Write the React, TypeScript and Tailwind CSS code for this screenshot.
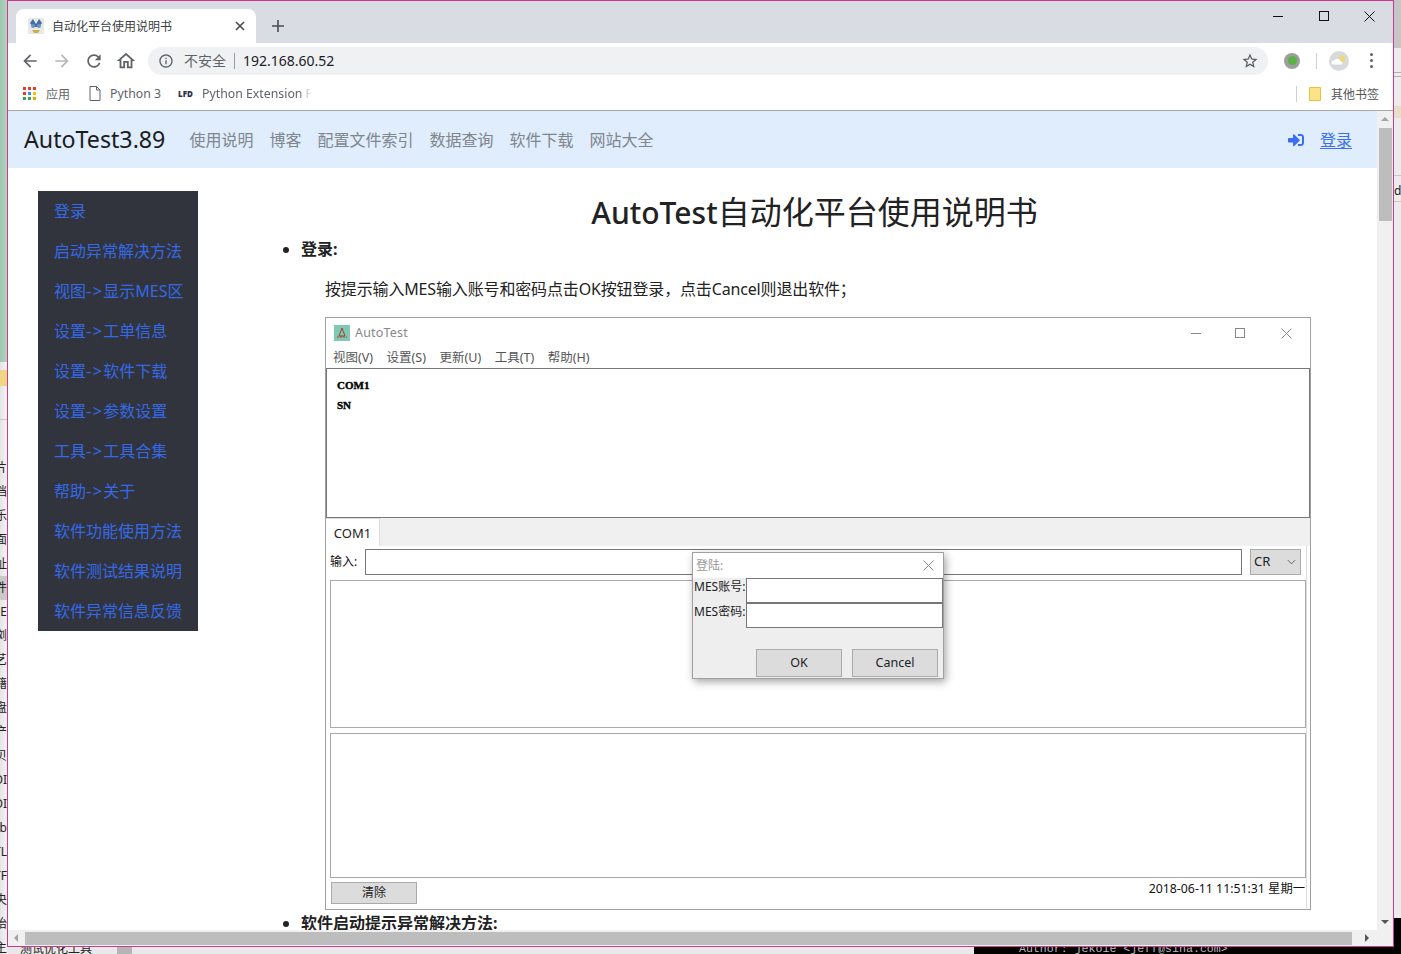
import { FaSignInAlt } from 'react-icons/fa';

const font = "font-['Noto_Sans','Noto_Sans_CJK_SC',sans-serif]";

const sideLinks = [
  '登录',
  '启动异常解决方法',
  '视图->显示MES区',
  '设置->工单信息',
  '设置->软件下载',
  '设置->参数设置',
  '工具->工具合集',
  '帮助->关于',
  '软件功能使用方法',
  '软件测试结果说明',
  '软件异常信息反馈',
];

const navLinks = ['使用说明', '博客', '配置文件索引', '数据查询', '软件下载', '网站大全'];

const leftChars = ['片', '档', '乐', '面', '址', '件', 'E', '浏', '艺', '籍', '盘', '产', '贝', 'DI', 'DI', 'sb', 'TL', 'TF', '央', '饴', '主'];

function Mat({ d, className }: { d: string; className: string }) {
  return (
    <svg viewBox="0 0 24 24" className={className} fill="currentColor">
      <path d={d} />
    </svg>
  );
}

function TabBar() {
  return (
    <div className="flex h-[42px] shrink-0 bg-[#dadce3] pl-2">
      <div className="mt-2 flex h-[34px] w-[240px] items-center rounded-t-lg bg-white pl-3 pr-[11px]">
        <svg viewBox="0 0 16 16" className="h-4 w-4 shrink-0">
          <rect width="16" height="16" fill="#e8e8e8" />
          <path d="M2 5 5 1l3 5 3-5 3 4-3 4H5z" fill="#3f6fa8" />
          <circle cx="5" cy="8" r="2" fill="#6f93bd" />
          <circle cx="11" cy="8" r="2" fill="#6f93bd" />
          <path d="M4 12h8l-2 3H6z" fill="#c8b04a" />
        </svg>
        <span className="ml-2 flex-1 pt-[2px] text-xs text-[#3c4043]">自动化平台使用说明书</span>
        <svg viewBox="0 0 10 10" className="h-[10px] w-[10px] text-[#4a4a4a]" stroke="currentColor" strokeWidth="1.6">
          <path d="M1 1l8 8M9 1l-8 8" />
        </svg>
      </div>
      <svg viewBox="0 0 12 12" className="ml-4 mt-[19px] h-3 w-3 text-[#4a4d52]" stroke="currentColor" strokeWidth="1.6">
        <path d="M6 0v12M0 6h12" />
      </svg>
      <div className="flex-1" />
      <div className="flex h-[30px] items-center text-[#111]">
        <div className="mr-[36px] h-px w-[10px] bg-current" />
        <div className="mr-[35px] h-[10px] w-[10px] border border-current" />
        <svg viewBox="0 0 11 11" className="mr-[18px] h-[11px] w-[11px]" stroke="currentColor" strokeWidth="1">
          <path d="M.5.5l10 10M10.5.5l-10 10" />
        </svg>
      </div>
    </div>
  );
}

function Toolbar() {
  return (
    <div className="flex h-[37px] shrink-0 items-center bg-white pb-[2px] pl-[12px] text-[#5f6368]">
      <Mat className="h-5 w-5" d="M20 11H7.83l5.59-5.59L12 4l-8 8 8 8 1.41-1.41L7.83 13H20v-2z" />
      <Mat className="ml-3 h-5 w-5 text-[#b4b6b9]" d="M12 4l-1.41 1.41L16.17 11H4v2h12.17l-5.58 5.59L12 20l8-8z" />
      <Mat className="ml-3 h-5 w-5" d="M17.65 6.35C16.2 4.9 14.21 4 12 4c-4.42 0-7.99 3.58-7.99 8s3.57 8 7.99 8c3.73 0 6.84-2.55 7.73-6h-2.08c-.82 2.33-3.04 4-5.65 4-3.31 0-6-2.69-6-6s2.69-6 6-6c1.66 0 3.14.69 4.22 1.78L13 11h7V4l-2.35 2.35z" />
      <Mat className="ml-[11px] h-[22px] w-[22px]" d="M12 5.69l5 4.5V18h-2v-6H9v6H7v-7.81l5-4.5M12 3L2 12h3v8h6v-6h2v6h6v-8h3L12 3z" />
      <div className="ml-[11px] flex h-7 w-[1120px] items-center rounded-full bg-[#eff1f3] pl-[10px] pr-[9px]">
        <Mat className="h-4 w-4" d="M11 7h2v2h-2zm0 4h2v6h-2zm1-9C6.48 2 2 6.48 2 12s4.48 10 10 10 10-4.48 10-10S17.52 2 12 2zm0 18c-4.41 0-8-3.59-8-8s3.59-8 8-8 8 3.59 8 8-3.59 8-8 8z" />
        <span className="ml-[10px] text-sm">不安全</span>
        <div className="mx-2 h-4 w-px bg-[#9a9da1]" />
        <span className="text-sm text-[#202124]">192.168.60.52</span>
        <div className="flex-1" />
        <Mat className="h-[18px] w-[18px] text-[#55585c]" d="M22 9.24l-7.19-.62L12 2 9.19 8.63 2 9.24l5.46 4.73L5.82 21 12 17.27 18.18 21l-1.63-7.03L22 9.24zM12 15.4l-3.76 2.27 1-4.28-3.32-2.88 4.38-.38L12 6.1l1.71 4.04 4.38.38-3.32 2.88 1 4.28L12 15.4z" />
      </div>
      <div className="ml-4 flex h-4 w-4 items-center justify-center rounded-full bg-[#9e9e9e]">
        <div className="h-[9px] w-[9px] rounded-full bg-[#5cb345]" />
      </div>
      <div className="ml-4 h-4 w-px bg-[#d0d0d0]" />
      <svg viewBox="0 0 20 20" className="ml-[12px] h-5 w-5 shrink-0">
        <circle cx="10" cy="10" r="10" fill="#d9d9d9" />
        <circle cx="13" cy="8" r="3" fill="#f2d860" />
        <path d="M4 14a2.5 2.5 0 0 1 1-5 4 4 0 0 1 7 1 2.2 2.2 0 0 1 1 4z" fill="#fff" stroke="#bcd0e6" strokeWidth=".6" />
      </svg>
      <div className="ml-[21px] flex flex-col gap-[3px]">
        <div className="h-[3px] w-[3px] rounded-full bg-[#5f6368]" />
        <div className="h-[3px] w-[3px] rounded-full bg-[#5f6368]" />
        <div className="h-[3px] w-[3px] rounded-full bg-[#5f6368]" />
      </div>
    </div>
  );
}

function Bookmarks() {
  return (
    <div className="flex h-[31px] shrink-0 items-center border-b border-[#a8a8a8] bg-white pb-px pl-[15px] text-xs text-[#5f6368]">
      <svg viewBox="0 0 13 13" className="mb-[2px] h-[13px] w-[13px]">
        <rect x="0" y="0" width="3" height="3" fill="#e53935" />
        <rect x="5" y="0" width="3" height="3" fill="#e53935" />
        <rect x="10" y="0" width="3" height="3" fill="#e53935" />
        <rect x="0" y="5" width="3" height="3" fill="#e53935" />
        <rect x="5" y="5" width="3" height="3" fill="#4285f4" />
        <rect x="10" y="5" width="3" height="3" fill="#fbbc05" />
        <rect x="0" y="10" width="3" height="3" fill="#34a853" />
        <rect x="5" y="10" width="3" height="3" fill="#34a853" />
        <rect x="10" y="10" width="3" height="3" fill="#f0a000" />
      </svg>
      <span className="ml-[10px]">应用</span>
      <svg viewBox="0 0 12 15" className="mb-[2px] ml-[19px] h-[15px] w-3" fill="none" stroke="#5f6368" strokeWidth="1">
        <path d="M1 .5h6.5L11 4v10.5H1zM7.5.5V4H11" />
      </svg>
      <span className="ml-[9px] w-[51px] whitespace-nowrap text-[12.3px]">Python 3</span>
      <span className="ml-[17px] w-[16px] text-[8px] font-black text-[#2b2f4a]">LFD</span>
      <span className="ml-2 w-[110px] overflow-hidden whitespace-nowrap text-[12.3px] [mask-image:linear-gradient(to_right,black_88%,transparent)]">Python Extension Pa</span>
      <div className="flex-1" />
      <div className="mb-[2px] h-4 w-px bg-[#cfcfcf]" />
      <svg viewBox="0 0 12 14" className="mb-[2px] ml-[12px] h-[14px] w-3">
        <path d="M.5.5h11v13H.5z" fill="#fbe38a" stroke="#e8c23e" />
      </svg>
      <span className="ml-[10px] mr-[14px] text-[#555]">其他书签</span>
    </div>
  );
}

function AppShot() {
  return (
    <div className="flex h-[593px] w-[986px] shrink-0 flex-col border border-[#a0a0a0] bg-white text-xs">
      <div className="flex h-[28px] shrink-0 items-center pl-2 pt-[2px] text-[#888]">
        <svg viewBox="0 0 16 16" className="h-4 w-4">
          <rect width="16" height="16" fill="#7fc8b4" />
          <path d="M8 3l3 8H5z" fill="none" stroke="#a04030" />
          <path d="M3 12h10" stroke="#c03030" strokeDasharray="2 1" />
        </svg>
        <span className="ml-[5px] text-[12.5px] tracking-[0.2px]">AutoTest</span>
        <div className="flex-1" />
        <div className="mr-[34px] h-px w-[10px] bg-[#888]" />
        <div className="mr-[36px] h-[10px] w-[10px] border border-[#888]" />
        <svg viewBox="0 0 11 11" className="mr-[18px] h-[11px] w-[11px]" stroke="#888" strokeWidth="1">
          <path d="M.5.5l10 10M10.5.5l-10 10" />
        </svg>
      </div>
      <div className="flex h-[22px] shrink-0 items-center gap-[13.6px] pl-[7px] pt-[2px] text-[12.5px] text-[#555]">
        <span>视图(V)</span>
        <span>设置(S)</span>
        <span>更新(U)</span>
        <span>工具(T)</span>
        <span>帮助(H)</span>
      </div>
      <div className="h-[150px] shrink-0 border border-[#777] pl-[10px] pt-[6px] font-['Liberation_Serif','Noto_Sans_CJK_SC',serif] text-[11px] font-black leading-5 text-black [-webkit-text-stroke:0.4px_black]">
        <div>COM1</div>
        <div>SN</div>
      </div>
      <div className="flex min-h-0 flex-1 flex-col bg-[#f0f0f0]">
        <div className="flex h-7 shrink-0">
          <div className="flex h-[29px] w-[54px] items-center justify-center border-r border-t border-[#dcdcdc] bg-white pt-[2px] text-[13px] text-[#222]">COM1</div>
        </div>
        <div className="flex min-h-0 flex-1 flex-col bg-white pb-px pl-[3px]">
          <div className="mr-[3px] flex min-h-0 flex-1 flex-col border-r border-[#dcdcdc]">
            <div className="flex h-[32px] shrink-0 items-center">
              <span className="ml-px w-[35px] text-xs text-[#111]">输入:</span>
              <div className="h-[26px] w-[877px] border border-[#777] bg-white" />
              <div className="ml-2 flex h-[26px] w-[51px] items-center justify-between border border-[#aaa] bg-[#dcdcdc] pl-[3px] pr-[4px] text-[13px] text-[#222]">
                <span>CR</span>
                <svg viewBox="0 0 10 6" className="h-[6px] w-[9px]" fill="none" stroke="#555" strokeWidth="1">
                  <path d="M1 1l4 4 4-4" />
                </svg>
              </div>
            </div>
            <div className="ml-px mt-[2px] h-[148px] shrink-0 border border-[#aaa] bg-white" />
            <div className="ml-px mt-[5px] h-[145px] shrink-0 border border-[#aaa] bg-white" />
            <div className="flex flex-1 items-start justify-between pl-[2px] pr-px">
              <div className="mt-[4px] flex h-[22px] w-[86px] items-center justify-center border border-[#aaa] bg-[#dcdcdc] text-[#222]">清除</div>
              <span className="mt-[3px] text-[12.3px] text-[#111]">2018-06-11 11:51:31 星期一</span>
            </div>
          </div>
        </div>
      </div>
    </div>
  );
}

function LoginDialog() {
  return (
    <div className="absolute left-[692px] top-[552px] z-10 flex h-[127px] w-[252px] flex-col border border-[#a0a0a0] bg-[#eeeeee] text-xs text-[#222] shadow-[2px_3px_8px_rgba(0,0,0,0.35)]">
      <div className="flex h-[25px] shrink-0 items-center justify-between bg-white pl-[3px] pr-[9px] text-[#999]">
        <span>登陆:</span>
        <svg viewBox="0 0 11 11" className="h-[11px] w-[11px]" stroke="#888" strokeWidth="1">
          <path d="M.5.5l10 10M10.5.5l-10 10" />
        </svg>
      </div>
      <div className="flex h-[25px] shrink-0 items-center">
        <span className="w-[53px] shrink-0 pb-[7px] pl-px">MES账号:</span>
        <div className="h-[25px] flex-1 border border-[#777] bg-white" />
      </div>
      <div className="flex h-[25px] shrink-0 items-center">
        <span className="w-[53px] shrink-0 pb-[7px] pl-px">MES密码:</span>
        <div className="h-[25px] flex-1 border border-[#777] bg-white" />
      </div>
      <div className="mr-[5px] mt-[21px] flex justify-end gap-[10px]">
        <div className="flex h-[28px] w-[86px] items-center justify-center border border-[#aaa] bg-[#dcdcdc] text-[12.5px]">OK</div>
        <div className="flex h-[28px] w-[86px] items-center justify-center border border-[#aaa] bg-[#dcdcdc] text-[12.5px]">Cancel</div>
      </div>
    </div>
  );
}

function VScroll() {
  return (
    <div className="flex w-[16px] shrink-0 flex-col items-center bg-[#f0f0f0]">
      <div className="mt-[6px] h-0 w-0 border-x-[4px] border-b-[4px] border-x-transparent border-b-[#a3a3a3]" />
      <div className="mt-[7px] h-[93px] w-[13px] bg-[#bdbdbd]" />
      <div className="flex-1" />
      <div className="mb-[6px] h-0 w-0 border-x-[4px] border-t-[4px] border-x-transparent border-t-[#555]" />
    </div>
  );
}

function SideLink({ text }: { text: string }) {
  const parts = text.split('->');
  return (
    <div className="flex h-10 items-center whitespace-nowrap">
      {parts.length === 2 ? (
        <span>
          {parts[0]}
          <span className="tracking-[1.5px]">-&gt;</span>
          {parts[1]}
        </span>
      ) : (
        text
      )}
    </div>
  );
}

function LeftStrip() {
  return (
    <div className="flex h-full w-[7px] shrink-0 flex-col overflow-hidden bg-gradient-to-r from-[#e4e4e4] to-[#f4f4f4]">
      <div className="h-[362px] shrink-0 bg-gradient-to-r from-[#9cc6ae] to-[#b6d2c0]" />
      <div className="mt-[8px] h-[16px] shrink-0 bg-[#f0d684]" />
      <div className="mt-[33px] h-px shrink-0 bg-[#c8c8c8]" />
      <div className="mt-[36px] flex flex-col">
        {leftChars.map((c, i) => (
          <div
            key={i}
            className={`h-6 w-[7px] overflow-hidden whitespace-nowrap text-right text-xs leading-6 text-[#222] [direction:rtl] ${c === '件' ? 'bg-[#c9c9c9]' : ''}`}
          >
            {c}
          </div>
        ))}
      </div>
    </div>
  );
}

function RightStrip() {
  return (
    <div className="flex h-full w-[7px] shrink-0 flex-col overflow-hidden bg-[#ececec] text-xs text-[#222]">
      <div className="h-[48px] shrink-0 bg-[#c6c6c6]" />
      <div className="mt-[24px] h-px shrink-0 bg-[#b0b0b0]" />
      <div className="mt-[3px] h-px shrink-0 bg-[#b0b0b0]" />
      <div className="mt-[29px] h-3 shrink-0 bg-[#e6e0c8]" />
      <div className="mt-[57px] h-px shrink-0 bg-[#c8c8c8]" />
      <div className="mt-[7px] h-4 shrink-0 overflow-hidden leading-4">d|</div>
      <div className="mt-[2px] h-px shrink-0 bg-[#c8c8c8]" />
      <div className="flex-1" />
      <div className="h-[36px] shrink-0 bg-black" />
    </div>
  );
}

export default function App() {
  return (
    <div className={`relative flex h-[954px] w-[1401px] overflow-hidden bg-[#efefef] ${font}`}>
      <LeftStrip />

      <div className="flex h-[947px] w-[1387px] shrink-0 flex-col border border-[#d0388f] bg-white">
        <TabBar />
        <Toolbar />
        <Bookmarks />
        <div className="flex min-h-0 flex-1 flex-col">
          <div className="flex min-h-0 flex-1">
            <div className="min-w-0 flex-1 overflow-hidden">
              <div className="flex h-[57px] items-center bg-[#dfedfc] pl-4 pr-[25px] text-base text-[#80868c]">
                <span className="mr-6 text-[23.2px] text-[#1c1c1c]">AutoTest3.89</span>
                <div className="flex gap-4">
                  {navLinks.map((n) => (
                    <span key={n}>{n}</span>
                  ))}
                </div>
                <div className="flex-1" />
                <FaSignInAlt className="h-4 w-4 text-[#3b6ef2]" />
                <span className="ml-4 text-[#3b6ef2] underline decoration-1 underline-offset-2">登录</span>
              </div>
              <div className="flex pt-[23px]">
                <div className="ml-[30px] flex w-[160px] shrink-0 flex-col self-start bg-[#31343d] px-4 text-base text-[#3569e6]">
                  {sideLinks.map((s) => (
                    <SideLink key={s} text={s} />
                  ))}
                </div>
                <div className="min-w-0 flex-1 text-[#222]">
                  <h1 className="ml-[54px] text-center text-[32px] font-normal leading-[42px]">
                    <span className="text-[30px] font-medium">AutoTest</span>自动化平台使用说明书
                  </h1>
                  <ul className="ml-[103px] mt-[3px] list-disc text-base">
                    <li className="font-bold leading-6">登录:</li>
                  </ul>
                  <p className="ml-[127px] mt-[16px] text-base leading-6 tracking-[-0.15px]">按提示输入MES输入账号和密码点击OK按钮登录，点击Cancel则退出软件；</p>
                  <div className="ml-[127px] mt-[16px]">
                    <AppShot />
                  </div>
                  <ul className="ml-[103px] mt-px list-disc text-base">
                    <li className="font-bold leading-6">软件启动提示异常解决方法:</li>
                  </ul>
                </div>
              </div>
            </div>
            <VScroll />
          </div>
          <div className="flex h-[16px] shrink-0 items-center bg-[#f0f0f0]">
            <div className="ml-[6px] h-0 w-0 border-y-[4px] border-r-[4px] border-y-transparent border-r-[#a3a3a3]" />
            <div className="ml-[7px] h-[13px] w-[1327px] bg-[#bdbdbd]" />
            <div className="ml-[13px] h-0 w-0 border-y-[4px] border-l-[4px] border-y-transparent border-l-[#555]" />
          </div>
        </div>
      </div>

      <RightStrip />

      <div className="absolute bottom-0 left-[7px] flex h-[7px] w-[1394px] overflow-hidden bg-[#e9e9e9] text-xs leading-[3px]">
        <span className="ml-[13px] text-[#222]">测试优化工具</span>
        <div className="ml-[25px] h-[7px] w-[15px] bg-[#b5b5b5]" />
        <div className="ml-auto flex h-[7px] w-[427px] bg-black font-['Liberation_Mono',monospace] text-[11.6px] text-[#bbb]">
          <span className="ml-[45px] whitespace-nowrap">Author: jekoie &lt;jeff@sina.com&gt;</span>
        </div>
      </div>

      <LoginDialog />
    </div>
  );
}
